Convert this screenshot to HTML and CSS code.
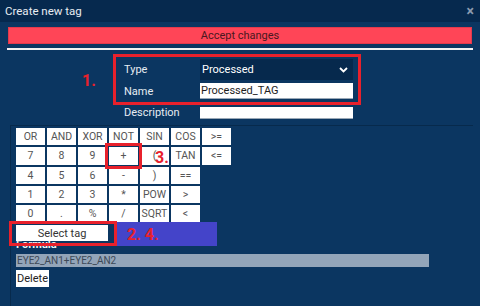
FILE: index.html
```html
<!DOCTYPE html>
<html lang="en">
<head>
  <meta charset="UTF-8">
  <title>Create new tag</title>
  <link rel="stylesheet" href="styles.css">
</head>
<body>

<div class="dialog">
  <div class="header">
    <span class="title">Create new tag</span>
    <span class="close">&times;</span>
  </div>

  <div class="content">
    <button class="accept">Accept changes</button>
    <div class="divider"></div>

    <div class="form-area">
      <span class="mark mark-1">1.</span>
      <div class="red-box">
        <div class="row">
          <label>Type</label>
          <div class="select">
            <span>Processed</span>
            <svg width="9" height="6" viewBox="0 0 9 6"><path d="M1 1 L4.5 4.5 L8 1" fill="none" stroke="#fff" stroke-width="1.8"/></svg>
          </div>
        </div>
        <div class="row">
          <label>Name</label>
          <input class="text-input" type="text" value="Processed_TAG">
        </div>
      </div>
      <div class="row desc-row">
        <label>Description</label>
        <input class="text-input desc-input" type="text" value="">
      </div>
    </div>

    <div class="panel">
      <div class="keypad">
        <button>OR</button><button>AND</button><button>XOR</button><button>NOT</button><button>SIN</button><button>COS</button><button>&gt;=</button>
        <button>7</button><button>8</button><button>9</button><button class="marked">+</button><button>(</button><button>TAN</button><button>&lt;=</button>
        <button>4</button><button>5</button><button>6</button><button>-</button><button>)</button><button>==</button><span></span>
        <button>1</button><button>2</button><button>3</button><button>*</button><button>POW</button><button>&gt;</button><span></span>
        <button>0</button><button>.</button><button>%</button><button>/</button><button>SQRT</button><button>&lt;</button><span></span>
      </div>
      <span class="mark mark-3">3.</span>

      <div class="select-row">
        <div class="select-box">
          <button class="select-tag">Select tag</button>
        </div>
        <div class="blue-box"><span class="mark">2. 4.</span></div>
      </div>

      <div class="formula-label">Formula</div>
      <div class="formula">EYE2_AN1+EYE2_AN2</div>
      <button class="delete">Delete</button>
    </div>
  </div>
</div>

</body>
</html>
```

FILE: styles.css
```css
body {
  margin: 0;
  padding: 0;
  background-color: #0b3661;
  font-family: Roboto, "Liberation Sans", sans-serif;
}
.dialog {
  width: 480px;
  height: 306px;
  overflow: hidden;
}
.header {
  height: 22px;
  background-color: #06294e;
  display: flex;
  align-items: center;
  justify-content: space-between;
  padding: 0 6px 0 5px;
}
.title {
  color: #e8edf3;
  font-size: 11.5px;
}
.close {
  color: #8a9bb0;
  font-size: 14px;
  font-weight: bold;
}
.content {
  padding: 0 7px;
}
.accept {
  display: block;
  width: calc(100% - 2px);
  margin: 5px 1px 0;
  height: 17px;
  background-color: #ff4557;
  border: 1px solid #e23a4c;
  color: #4a1820;
  font-family: inherit;
  font-size: 11px;
  padding: 0;
}
.divider {
  height: 2px;
  background-color: #f2f2f2;
  margin-top: 4px;
}
.form-area {
  position: relative;
  margin: 4px 0 0 106px;
  width: 248px;
}
.red-box {
  border: 3px solid #e8212c;
  padding: 2px 2px 3px 8px;
}
.row {
  display: grid;
  grid-template-columns: 76px 153px;
  align-items: center;
}
.row + .row {
  margin-top: 3px;
}
.row label {
  color: #e6ecf2;
  font-size: 11px;
}
.select {
  height: 21px;
  background-color: #06294d;
  color: #fff;
  font-size: 11px;
  display: flex;
  align-items: center;
  justify-content: space-between;
  padding: 0 5px 0 2px;
  box-sizing: border-box;
}
.text-input {
  height: 16px;
  box-sizing: border-box;
  border: none;
  border-bottom: 1px solid #9aa8b6;
  padding: 0 1px;
  font-family: inherit;
  font-size: 11px;
  color: #1e1e1e;
  width: 153px;
}
.desc-row {
  padding-left: 11px;
  margin-top: 1px;
}
.desc-input {
  height: 12px;
}
.mark {
  color: #e8212c;
  font-size: 16px;
  font-weight: bold;
}
.mark-1 {
  position: absolute;
  left: -31px;
  top: 17px;
}
.panel {
  position: relative;
  margin: 6px 0 0 3px;
  border-left: 1px solid #072a4c;
  border-top: 1px solid #072a4c;
  padding: 2px 0 0 5px;
  height: 200px;
}
.keypad {
  display: grid;
  grid-template-columns: repeat(7, 29px);
  grid-auto-rows: 17.3px;
  column-gap: 2px;
  row-gap: 2px;
}
.keypad button {
  background-color: #fff;
  border: none;
  padding: 0;
  color: #555;
  font-family: inherit;
  font-size: 10.5px;
}
.keypad .marked {
  position: relative;
  z-index: 1;
  outline: 3px solid #e8212c;
  outline-offset: 1px;
}
.mark-3 {
  position: absolute;
  z-index: 2;
  left: 144px;
  top: 22px;
}
.select-row {
  position: relative;
  z-index: 1;
  display: flex;
  margin-left: -7px;
  margin-top: -1px;
}
.select-box {
  border: 3px solid #e8212c;
  padding: 1px 1px 1px 4px;
  width: 97px;
}
.select-tag {
  display: block;
  width: 92px;
  height: 16px;
  background-color: #fff;
  border: none;
  color: #333;
  font-family: inherit;
  font-size: 11px;
  padding: 0;
}
.blue-box {
  width: 100px;
  height: 24px;
  margin-top: 1px;
  background-color: #4444c9;
  display: flex;
  align-items: flex-end;
  padding-left: 10px;
  box-sizing: border-box;
  line-height: 22px;
}
.formula-label {
  margin-top: -8px;
  color: #f0f3f6;
  font-size: 11px;
  font-weight: bold;
  line-height: 13px;
}
.formula {
  width: 413px;
  height: 13px;
  margin-top: 3px;
  background-color: #93a5b9;
  color: #3d4957;
  font-size: 10px;
  line-height: 13px;
  padding-left: 1px;
  box-sizing: border-box;
}
.delete {
  display: block;
  margin-top: 3px;
  height: 17px;
  width: 33px;
  background-color: #fff;
  border: none;
  color: #222;
  font-family: inherit;
  font-size: 11px;
  padding: 0;
}
```
